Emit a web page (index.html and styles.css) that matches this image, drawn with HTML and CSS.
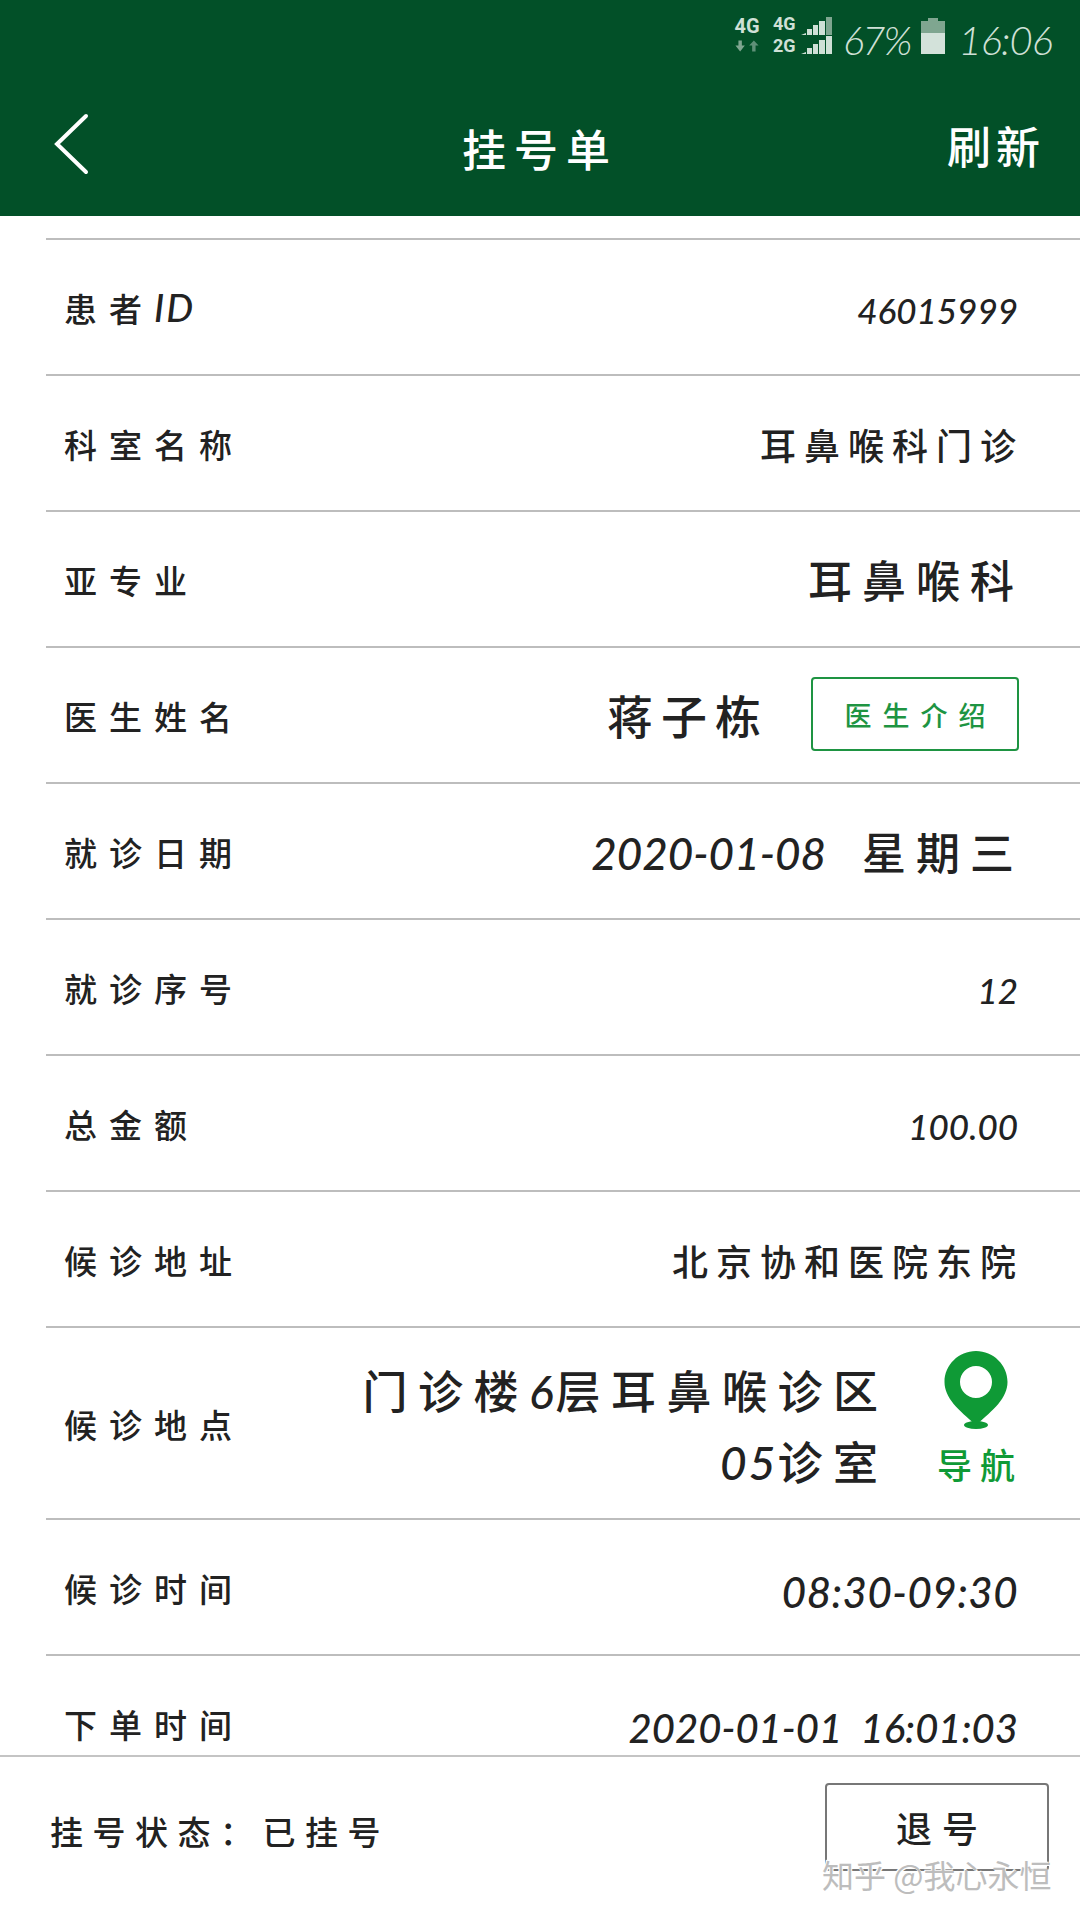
FILE: index.html
```html
<!DOCTYPE html>
<html lang="zh">
<head>
<meta charset="utf-8">
<title>挂号单</title>
<link rel="stylesheet" href="styles.css">
</head>
<body>
<div class="page">
  <header class="header">
    <div class="status">
      <div class="net-a">
        <span class="net-label">4G</span>
        <svg class="arrows" width="24" height="12" viewBox="0 0 28 13"><path fill="#7fa690" d="M4 0h4v6h3.500L6 13 .5 6H4z"/><path fill="#5f9078" d="M20 13h4V6h3.500L22 0l-5.500 6H20z"/></svg>
      </div>
      <div class="net-b">
        <div class="sim-labels"><span class="sim-label">4G</span><span class="sim-label">2G</span></div>
        <div class="sim-bars">
          <svg class="bars" width="32" height="18" viewBox="0 0 32 18"><path fill="#cfe0d6" d="M0 18l5-2v2zM6 18v-6h5v6zM12 18V8h5v10zM18 18V4h6v14z"/><path fill="#7fa690" d="M25 18V0h6v18z"/></svg>
          <svg class="bars" width="32" height="18" viewBox="0 0 32 18"><path fill="#cfe0d6" d="M0 18l5-2v2zM6 18v-6h5v6zM12 18V8h5v10zM18 18V4h6v14zM25 18V0h6v18z"/></svg>
        </div>
      </div>
      <span class="clock pct">67%</span>
      <svg class="battery" width="24" height="36" viewBox="0 0 24 36"><path fill="#7fa690" d="M7 0h10v3h7v12H0V3h7z"/><path fill="#d3e2da" d="M0 15h24v21H0z"/></svg>
      <span class="clock">16:06</span>
    </div>
    <nav class="nav">
      <svg class="back" width="36" height="62" viewBox="0 0 36 62"><path fill="none" stroke="#fff" stroke-width="4" stroke-linecap="round" d="M32 3 3 31l29 28"/></svg>
      <h1 class="title">挂号单</h1>
      <span class="refresh">刷新</span>
    </nav>
  </header>

  <main class="list">
    <div class="rows">
      <div class="row"><span class="label">患者<span class="num">ID</span></span><span class="value num">46015999</span></div>
      <div class="row"><span class="label">科室名称</span><span class="value">耳鼻喉科门诊</span></div>
      <div class="row"><span class="label">亚专业</span><span class="value big">耳鼻喉科</span></div>
      <div class="row"><span class="label">医生姓名</span>
        <div class="doctor"><span class="value big">蒋子栋</span><button class="intro">医生介绍</button></div>
      </div>
      <div class="row"><span class="label">就诊日期</span><span class="value big"><span class="num date">2020-01-08</span> 星期三</span></div>
      <div class="row"><span class="label">就诊序号</span><span class="value num">12</span></div>
      <div class="row"><span class="label">总金额</span><span class="value num">100.00</span></div>
      <div class="row"><span class="label">候诊地址</span><span class="value">北京协和医院东院</span></div>
      <div class="row row-tall"><span class="label">候诊地点</span>
        <div class="place">
          <div class="place-text">门诊楼<span class="num">6</span>层耳鼻喉诊区<br><span class="num">05</span>诊室</div>
          <div class="navi">
            <svg class="pin" width="64" height="78" viewBox="0 0 64 78"><ellipse cx="32" cy="74" rx="12" ry="4" fill="#0f9a36"/><path fill="#0f9a36" fill-rule="evenodd" d="M32 0c17.300 0 31.500 14 31.500 31 0 16-14 28-31.500 43C14.500 59 .5 47 .5 31 .5 14 14.700 0 32 0zm0 15a16 16 0 1 0 0 32 16 16 0 0 0 0-32z"/></svg>
            <span class="navi-text">导航</span>
          </div>
        </div>
      </div>
      <div class="row"><span class="label">候诊时间</span><span class="value num time">08:30-09:30</span></div>
      <div class="row"><span class="label">下单时间</span><span class="value num stamp">2020-01-01&nbsp;&nbsp;16:01:03</span></div>
    </div>
  </main>

  <footer class="footer">
    <span class="state">挂号状态：已挂号</span>
    <button class="cancel">退号</button>
  </footer>
  <div class="mark">知乎 @我心永恒</div>
</div>
</body>
</html>
```

FILE: styles.css
```css
* { box-sizing: border-box; }
html, body { margin: 0; padding: 0; }
body {
  width: 1080px;
  height: 1920px;
  overflow: hidden;
  background: #fff;
  color: #222;
  font-family: "Noto Sans CJK SC", "Noto Sans", sans-serif;
  font-weight: 500;
}
.page {
  position: relative;
  width: 1080px;
  height: 1920px;
  display: flex;
  flex-direction: column;
}

/* Header */
.header {
  height: 216px;
  flex: none;
  background: #025028;
  display: flex;
  flex-direction: column;
}
.status {
  height: 86px;
  padding: 17px 28px 0 0;
  display: flex;
  justify-content: flex-end;
  align-items: flex-start;
  color: #d0e0d7;
}
.net-a {
  width: 40px;
  display: flex;
  flex-direction: column;
  align-items: center;
  margin-right: 6px;
}
.net-label {
  font: 700 20px/18px Roboto, sans-serif;
}
.arrows { margin-top: 5px; }
.net-b {
  display: flex;
  margin-right: 10px;
}
.sim-labels {
  width: 28px;
  display: flex;
  flex-direction: column;
  gap: 4px;
  margin-top: -2px;
}
.sim-label {
  font: 700 18px/18px Roboto, sans-serif;
}
.sim-bars {
  display: flex;
  flex-direction: column;
  gap: 1px;
}
.bars { display: block; }
.clock {
  font: italic 300 40px/38px Lato, sans-serif;
  margin-top: 4px;
  letter-spacing: -1px;
}
.pct { margin-right: 11px; letter-spacing: -2px; }
.battery { margin: 1px 13px 0 0; flex: none; }

.nav {
  height: 130px;
  display: grid;
  grid-template-columns: 1fr auto 1fr;
  align-items: center;
  padding: 0 54px 14px 54px;
  color: #fff;
}
.back { display: block; }
.title {
  margin: 8px 0 0;
  font-size: 44px;
  line-height: 60px;
  font-weight: 500;
  letter-spacing: 8px;
}
.refresh {
  justify-self: end;
  margin: 2px -19px 0 0;
  font-size: 44px;
  line-height: 60px;
  letter-spacing: 5px;
}

/* List */
.list {
  flex: 1;
  min-height: 0;
  overflow: hidden;
  padding: 22px 0 0 46px;
}
.rows { border-top: 2px solid #bdbdbd; }
.row {
  height: 136px;
  border-bottom: 2px solid #bdbdbd;
  padding-top: 6px;
  padding-left: 18px;
  padding-right: 62px;
  display: flex;
  align-items: center;
  justify-content: space-between;
}
.row-tall { height: 192px; }
.label {
  font-size: 33px;
  letter-spacing: 12px;
  white-space: nowrap;
  margin-bottom: 4px;
}
.value {
  font-size: 36px;
  letter-spacing: 8px;
  white-space: nowrap;
  margin: 0 -6px 4px 0;
}
.value.big {
  font-size: 44px;
  letter-spacing: 10px;
  margin-bottom: 6px;
}
.num {
  font-family: Lato, "Noto Sans", sans-serif;
  font-style: italic;
  letter-spacing: 1px;
}
.label .num { letter-spacing: 2px; font-size: 38px; }
.value.num { font-size: 35px; letter-spacing: 0; margin: 0; }
.date { letter-spacing: 0; font-size: 44px; margin-right: 16px; }
.value.time { font-size: 42px; letter-spacing: .5px; margin-top: 4px; }
.value.stamp { font-size: 40px; letter-spacing: 0; margin-top: 4px; }

.doctor {
  display: flex;
  align-items: center;
  gap: 42px;
  margin-right: -1px;
  margin-bottom: 8px;
}
.doctor .value.big {
  font-size: 46px;
  letter-spacing: 8px;
  margin: 0;
}
.intro {
  width: 208px;
  height: 74px;
  padding: 0 0 0 11px;
  border: 2px solid #1e9442;
  border-radius: 4px;
  background: #fff;
  color: #1e9442;
  font-family: inherit;
  font-weight: 500;
  font-size: 27px;
  letter-spacing: 11px;
}

.place {
  display: flex;
  align-items: center;
  gap: 59px;
  margin-right: 3px;
}
.place-text {
  font-size: 45px;
  line-height: 69px;
  letter-spacing: 10.500px;
  text-align: right;
  margin-right: -10.500px;
  white-space: nowrap;
}
.place-text .num { font-size: 46px; letter-spacing: 2px; }
.navi {
  width: 78px;
  display: flex;
  flex-direction: column;
  align-items: center;
  color: #0f9a36;
  margin-bottom: 14px;
}
.pin { display: block; }
.navi-text {
  font-size: 35px;
  line-height: 46px;
  letter-spacing: 8px;
  margin-top: 12px;
  white-space: nowrap;
  margin-right: -8px;
}

/* Footer */
.footer {
  height: 165px;
  flex: none;
  background: #fff;
  border-top: 2px solid #c4c4c4;
  padding: 26px 31px 49px 50px;
  display: flex;
  justify-content: space-between;
  align-items: center;
}
.state {
  font-size: 33px;
  letter-spacing: 9.500px;
  white-space: nowrap;
  margin-top: 8px;
}
.cancel {
  width: 224px;
  height: 88px;
  padding: 0 0 0 10px;
  border: 2px solid #777;
  border-radius: 4px;
  background: #fff;
  color: #222;
  font-family: inherit;
  font-weight: 500;
  font-size: 36px;
  letter-spacing: 10px;
}
.mark {
  position: absolute;
  left: 822px;
  top: 1856px;
  font-size: 32px;
  font-weight: 400;
  line-height: 36px;
  color: #bdbdbd;
  white-space: nowrap;
  text-shadow: 1px 1px 0 #fff, -1px -1px 0 #fff;
}
```
